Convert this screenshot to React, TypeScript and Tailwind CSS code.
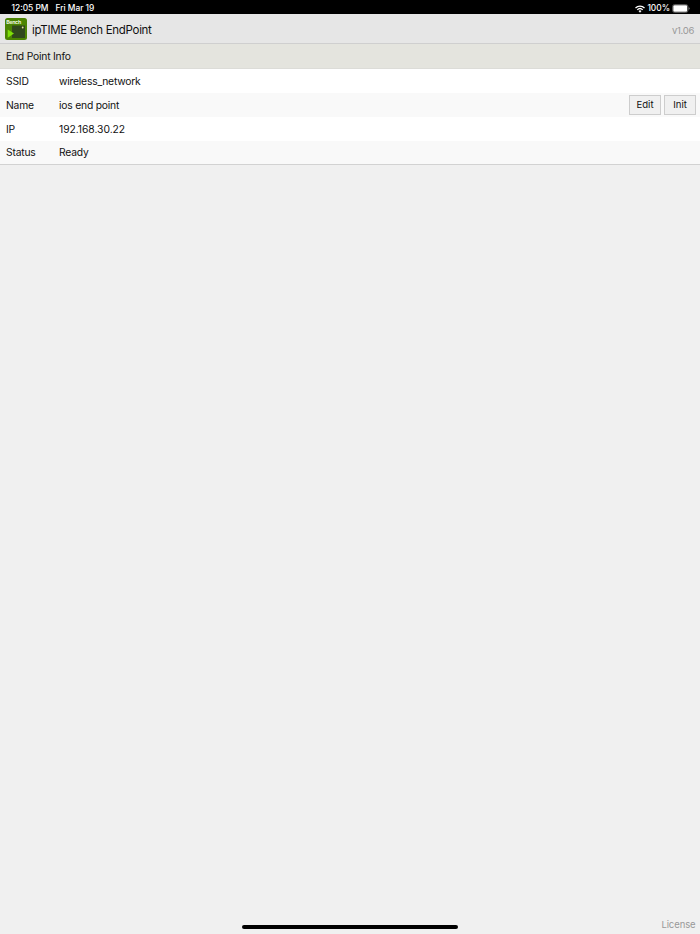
interface InfoRow {
  label:    string;
  value:    string;
  numeric?: boolean;
  actions?: string[];
}

const rows: InfoRow[] = [
  { label: 'SSID',   value: 'wireless_network' },
  { label: 'Name',   value: 'ios end point', actions: ['Edit', 'Init'] },
  { label: 'IP',     value: '192.168.30.22', numeric: true },
  { label: 'Status', value: 'Ready' },
];

function WifiIcon() {
  return (
    <svg width="10" height="8" viewBox="0 0 20 16" fill="none" stroke="white" strokeWidth="2.6">
      <path d="M1 6a13 13 0 0 1 18 0" />
      <path d="M4.5 9.7a8 8 0 0 1 11 0" />
      <path d="M7 12.2a4.3 4.3 0 0 1 6 0L10 15.5z" fill="white" stroke="none" />
    </svg>
  );
}

function BatteryIcon() {
  return (
    <svg width="18" height="9" viewBox="0 0 18 9">
      <rect x="0.5" y="0.5" width="15.5" height="8" rx="2.2" fill="none" stroke="#777" strokeWidth="0.7" />
      <rect x="1.3" y="1.3" width="13.9" height="6.4" rx="1.2" fill="white" />
      <path d="M16.7 3.2v2.6q1-.4 1-1.3t-1-1.3z" fill="#888" />
    </svg>
  );
}

function AppLogo() {
  return (
    <svg width="22" height="22" viewBox="0 0 22 22" className="shrink-0">
      <rect width="22" height="22" rx="2.5" fill="#4c8403" />
      <rect x="7" y="7.5" width="13" height="12.5" fill="#30481c" />
      <path d="M2.7 11.5v8.2L9 15.6z" fill="#7fdf08" />
      <circle cx="17.7" cy="9.5" r="0.9" fill="#e9e4a0" />
      <text x="1.2" y="5.6" fontSize="5.3" fontWeight="700" fontFamily="Inter, sans-serif" fill="#e8f3d8" textLength="15">
        Bench
      </text>
    </svg>
  );
}

export default function App() {
  return (
    <div className="flex h-screen flex-col overflow-hidden bg-[#f0f0f0] font-['Inter',sans-serif] text-[#111]">

      {/* Status bar */}
      <div className="flex h-[14px] shrink-0 items-center justify-between bg-black pt-[3px] pr-[10.5px] pl-[11.5px] text-[8.4px] leading-[11px] font-medium text-white">
        <div className="flex gap-[7px]">
          <span>12:05 PM</span>
          <span className="tracking-[-0.03px]">Fri Mar 19</span>
        </div>
        <div className="flex items-center">
          <WifiIcon />
          <span className="mr-[1.5px] ml-[2.5px]">100%</span>
          <BatteryIcon />
        </div>
      </div>

      {/* Header */}
      <header className="flex h-[30px] shrink-0 items-center border-b border-[#cfcfcf] bg-[#e6e6e6] pt-px pr-[6px] pl-[5px]">
        <AppLogo />
        <h1 className="ml-[5px] flex-1 pt-px text-[11.5px] leading-4 tracking-[-0.3px]">ipTIME Bench EndPoint</h1>
        <span className="pt-[3px] text-[9.5px] leading-4 tracking-[-0.3px] text-[#999]">v1.06</span>
      </header>

      {/* End point details */}
      <section className="shrink-0 border-b border-[#d2d2d2]">
        <h2 className="flex h-[25px] items-center border-b border-[#dcdcd8] bg-[#e4e4de] px-[6px] pt-px text-[10.3px] tracking-[-0.2px]">
          End Point Info
        </h2>
        <dl>
          {rows.map(row => (
            <div key={row.label} className="flex h-6 items-center bg-white pr-1 pl-[6px] text-[10.3px] tracking-[-0.2px] first:h-[23.5px] last:h-[23.5px] even:bg-[#f9f9f9]">
              <dt className="w-[53px] pt-[1.5px]">{row.label}</dt>
              <dd className={row.numeric ? 'flex-1 pt-[1.5px] tracking-[-0.03px]' : 'flex-1 pt-[1.5px]'}>{row.value}</dd>
              {row.actions && (
                <div className="flex gap-[3px]">
                  {row.actions.map(action => (
                    <button key={action} className="h-5 w-8 border border-[#cdcdcd] bg-[#f0f0f0] pt-px text-[9.6px] tracking-normal">
                      {action}
                    </button>
                  ))}
                </div>
              )}
            </div>
          ))}
        </dl>
      </section>

      {/* Footer */}
      <footer className="mt-auto grid h-[18px] shrink-0 grid-cols-[1fr_216px_1fr] items-center">
        <div className="col-start-2 mt-[3px] h-1 rounded-full bg-black" />
        <span className="pt-px pr-[4.5px] text-right text-[9.5px] tracking-[-0.1px] text-[#999]">License</span>
      </footer>
    </div>
  );
}
